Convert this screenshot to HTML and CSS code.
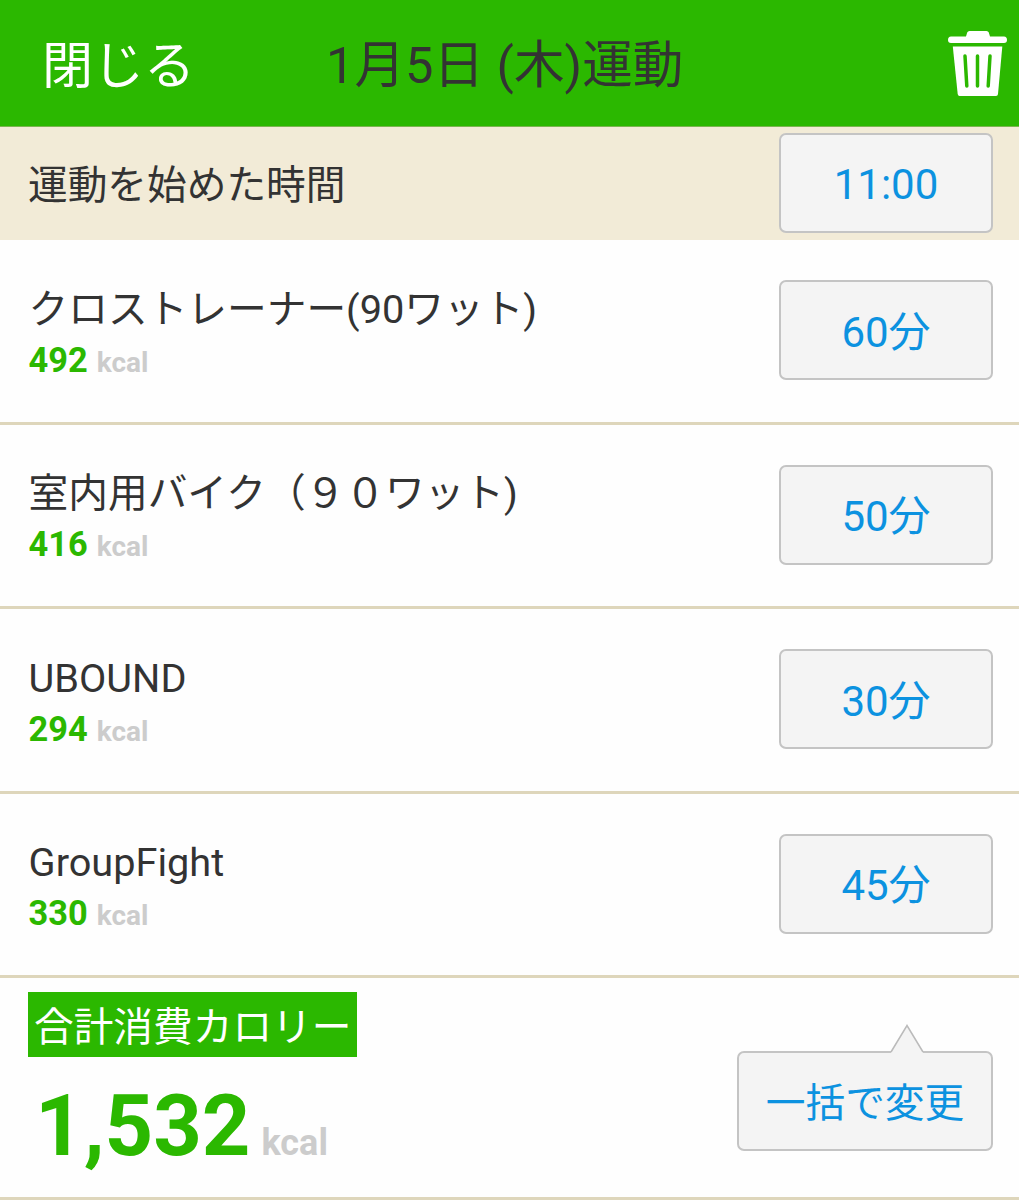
FILE: index.html
```html
<!DOCTYPE html>
<html lang="ja">
<head>
<meta charset="utf-8">
<title>1月5日 (木)運動</title>
<link rel="stylesheet" href="styles.css">
</head>
<body>
<header class="header">
  <a class="close">閉じる</a>
  <h1 class="title">1月5日 (木)運動</h1>
  <svg class="trash" width="60" height="66" viewBox="0 0 60 66" fill="#fff">
    <path d="M3 5.500H18L19.200 1.500Q19.700 0 21.500 0H38.500Q40.300 0 40.800 1.500L42 5.500H56Q59 5.500 59 9Q59 12 56 12H3Q0 12 0 9Q0 5.500 3 5.500Z"/>
    <path d="M4.800 15.500H54.300L50 63Q49.800 65 48 65H11.500Q10 65 9.700 63Z"/>
    <path d="M17 25L18.800 55M29.500 25V55M42 25L40.200 55" fill="none" stroke="#2bb800" stroke-width="3.500" stroke-linecap="round"/>
  </svg>
</header>
<main>
  <section class="start">
    <span class="label">運動を始めた時間</span>
    <button class="btn">11:00</button>
  </section>
  <ul class="list">
    <li class="row">
      <div class="info"><div class="name">クロストレーナー(90ワット)</div><div class="cal"><b>492</b><span>kcal</span></div></div>
      <button class="btn">60分</button>
    </li>
    <li class="row">
      <div class="info"><div class="name">室内用バイク（９０ワット)</div><div class="cal"><b>416</b><span>kcal</span></div></div>
      <button class="btn">50分</button>
    </li>
    <li class="row">
      <div class="info"><div class="name">UBOUND</div><div class="cal"><b>294</b><span>kcal</span></div></div>
      <button class="btn">30分</button>
    </li>
    <li class="row">
      <div class="info"><div class="name">GroupFight</div><div class="cal"><b>330</b><span>kcal</span></div></div>
      <button class="btn">45分</button>
    </li>
  </ul>
  <section class="total">
    <div class="sum">
      <div class="badge">合計消費カロリー</div>
      <div class="sum-cal"><b>1,532</b><span>kcal</span></div>
    </div>
    <button class="btn bulk">一括で変更
      <svg class="pointer" width="34" height="30" viewBox="0 0 34 30"><path d="M1 28L17 1.500L33 28V30H1Z" fill="#f4f4f4"/><path d="M1 28L17 1.500L33 28" fill="none" stroke="#bbb" stroke-width="1.500"/></svg>
    </button>
  </section>
</main>
</body>
</html>
```
FILE: styles.css
```css
* { box-sizing: border-box; }
body {
  margin: 0;
  background: #fefefe;
  color: #333;
  font-family: Roboto, "Noto Sans CJK JP", sans-serif;
  font-size: 39.7px;
}
.header {
  height: 127px;
  padding: 1px 11px 0 42px;
  background: #2bb800;
  border-bottom: 1px solid #7cb550;
  display: grid;
  grid-template-columns: 284px 1fr 60px;
  align-items: center;
}
.close { padding-top: 6px; color: #fff; font-size: 51px; line-height: 60px; }
.title { margin: 0; padding-top: 5px; font-size: 50.6px; font-weight: 400; line-height: 60px; white-space: nowrap; }
.trash { display: block; }
.start {
  height: 113px;
  padding: 0 26px 0 28px;
  background: #f2ebd7;
  display: flex;
  justify-content: space-between;
  align-items: center;
}
.label { padding-top: 4px; line-height: 50px; }
.btn {
  width: 214px;
  height: 100px;
  margin-top: -2px;
  padding: 4px 0 0;
  border: 2px solid #c4c4c4;
  border-radius: 7px;
  background: #f4f4f4;
  color: #0c92e0;
  font: inherit;
  font-size: 42px;
  line-height: 91px;
}
.list { margin: 0; padding: 0; list-style: none; }
.row {
  height: 184px;
  padding: 0 26px 0 28.6px;
  border-bottom: 3px solid #ded6bb;
  display: flex;
  justify-content: space-between;
  align-items: center;
}
.row:nth-child(odd) { height: 185px; }
.info { padding-bottom: 2px; }
.name { padding-top: 2px; line-height: 60px; white-space: nowrap; }
.cal { display: flex; align-items: baseline; gap: 9px; line-height: 40px; }
.cal b { color: #2bb800; font-size: 34.4px; }
.cal span { color: #ccc; font-size: 28px; font-weight: 700; }
.total {
  height: 222px;
  padding: 14px 26px 0 28px;
  border-bottom: 3px solid #ded6bb;
  display: flex;
  justify-content: space-between;
  align-items: flex-start;
}
.badge { width: 329px; height: 65px; padding: 3px 0 0 6px; background: #2bb800; color: #fff; line-height: 65px; white-space: nowrap; }
.sum-cal { padding: 19px 0 0 7px; display: flex; align-items: baseline; gap: 11px; line-height: 100px; }
.sum-cal b { color: #2bb800; font-size: 84.8px; }
.sum-cal span { color: #ccc; font-size: 36px; font-weight: 700; }
.bulk { position: relative; width: 256px; margin-top: 59px; padding-top: 5px; font-size: 39.7px; }
.pointer { position: absolute; left: 151px; top: -29px; }
```
